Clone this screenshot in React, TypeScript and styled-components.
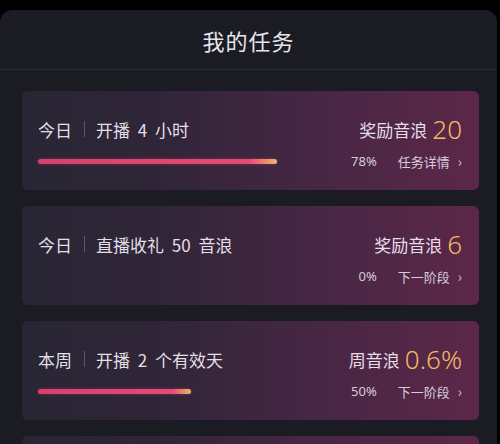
import React from "react";
import styled, { createGlobalStyle } from "styled-components";

const Global = createGlobalStyle`
  html, body { margin: 0; padding: 0; background: #000; overflow: hidden; }
  body { font-family: "Noto Sans CJK SC", "Noto Sans", sans-serif; }
  #root { height: 444px; }
`;

const Panel = styled.div`
  margin-top: 10px;
  width: 497px;
  height: 434px;
  background: #1b1b24;
  border-radius: 12px 12px 0 0;
  overflow: hidden;
  display: flex;
  flex-direction: column;
`;

const Header = styled.div`
  height: 59px;
  flex-shrink: 0;
  display: flex;
  align-items: center;
  justify-content: center;
  border-bottom: 1px solid #2a2a34;
  color: #e6e5ea;
  font-size: 22px;
  letter-spacing: 1px;
`;

const List = styled.div`
  padding: 21px 18px 0 22px;
  display: flex;
  flex-direction: column;
  gap: 16px;
`;

const Card = styled.div`
  flex-shrink: 0;
  height: 99px;
  box-sizing: border-box;
  border-radius: 6px;
  padding: 24px 17px 0 16px;
  background: linear-gradient(90deg, #282634 0%, #302538 30%, #472744 65%, #5c2749 100%);
  display: flex;
  flex-direction: column;
`;

const Row = styled.div<{ $top?: boolean }>`
  display: flex;
  align-items: center;
  justify-content: space-between;
  height: ${(p) => (p.$top ? "28px" : "16px")};
  margin-top: ${(p) => (p.$top ? "0" : "10px")};
`;

const TitleGroup = styled.div`
  display: flex;
  align-items: center;
  color: #e2dfe6;
  font-size: 17px;
  word-spacing: 4px;
  white-space: pre;
`;

const Sep = styled.span`
  width: 1px;
  height: 16px;
  background: #5f5668;
  margin: 0 11px 0 12px;
`;

const Reward = styled.div`
  display: flex;
  align-items: center;
  color: #e6dfe8;
  font-size: 17px;
`;

const RewardNum = styled.span`
  font-family: "Noto Sans", "Open Sans", sans-serif;
  font-weight: 300;
  color: #f3b862;
  font-size: 26px;
  margin-left: 5px;
  line-height: 1;
`;

const Track = styled.div`
  width: 306px;
  height: 16px;
  display: flex;
  align-items: center;
`;

const Bar = styled.div`
  height: 5px;
  border-radius: 3px;
  background: linear-gradient(90deg, #d4416e 0%, #e54a76 88%, #ebb868 100%);
  box-shadow: 0 0 3px rgba(230, 60, 110, 0.5);
`;

const Meta = styled.div`
  display: flex;
  align-items: center;
  color: #d9ccd9;
  font-size: 13px;
`;

const Pct = styled.span`
  font-family: "Noto Sans", sans-serif;
  margin-right: 21px;
`;

const Chevron = styled.span`
  margin-left: 8px;
  font-size: 14px;
`;

type Task = {
  period: string;
  name: string;
  label: string;
  value: string;
  pct: number;
  link: string;
};

const tasks: Task[] = [
  { period: "今日", name: "开播 4 小时", label: "奖励音浪", value: "20", pct: 78, link: "任务详情" },
  { period: "今日", name: "直播收礼 50 音浪", label: "奖励音浪", value: "6", pct: 0, link: "下一阶段" },
  { period: "本周", name: "开播 2 个有效天", label: "周音浪", value: "0.6%", pct: 50, link: "下一阶段" },
];

export default function App() {
  return (
    <>
      <Global />
      <Panel>
        <Header>我的任务</Header>
        <List>
          {tasks.map((t, i) => (
            <Card key={i}>
              <Row $top>
                <TitleGroup>
                  {t.period}
                  <Sep />
                  {t.name}
                </TitleGroup>
                <Reward>
                  {t.label}
                  <RewardNum>{t.value}</RewardNum>
                </Reward>
              </Row>
              <Row>
                <Track>
                  {t.pct > 0 && <Bar style={{ width: `${t.pct}%` }} />}
                </Track>
                <Meta>
                  <Pct>{t.pct}%</Pct>
                  {t.link}
                  <Chevron>›</Chevron>
                </Meta>
              </Row>
            </Card>
          ))}
          <Card />
        </List>
      </Panel>
    </>
  );
}
